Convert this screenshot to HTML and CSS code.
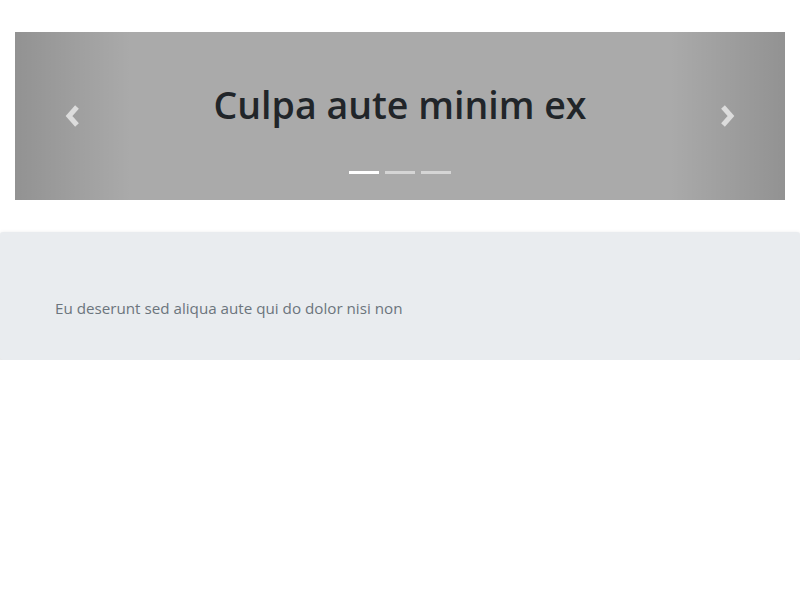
FILE: index.html
```html
<!DOCTYPE html>
<html>
<head>
<meta charset="utf-8">
<link rel="stylesheet" href="styles.css">
</head>
<body>
<div class="wrap">
  <div class="carousel">
    <div class="slide">
      <h1 class="title">Culpa aute minim ex</h1>
    </div>
    <a class="control prev">
      <svg width="16" height="22" viewBox="0 0 16 22"><polyline points="12,2 4,11 12,20" fill="none" stroke="#dcdcdc" stroke-width="5"/></svg>
    </a>
    <a class="control next">
      <svg width="16" height="22" viewBox="0 0 16 22"><polyline points="4,2 12,11 4,20" fill="none" stroke="#dcdcdc" stroke-width="5"/></svg>
    </a>
    <ol class="indicators">
      <li class="active"></li>
      <li></li>
      <li></li>
    </ol>
  </div>
</div>
<div class="jumbotron">
  <p class="lead">Eu deserunt sed aliqua aute qui do dolor nisi non</p>
</div>
</body>
</html>
```
FILE: styles.css
```css
html, body { margin: 0; padding: 0; background: #fff; }
body { font-family: "Open Sans", "Noto Sans", sans-serif; color: #212529; }
.wrap { padding: 32px 15px 32px; }
.carousel { position: relative; height: 168px; background: #aaa; overflow: hidden; }
.slide { height: 100%; display: flex; align-items: flex-start; justify-content: center; }
.title { margin: 81px 0 0; font-size: 37.5px; font-weight: 600; line-height: 1; color: #212529; transform: translateY(-27px); }
.control { position: absolute; top: 0; bottom: 0; width: 15%; display: flex; align-items: center; justify-content: center; }
.prev { left: 0; background: linear-gradient(to right, rgba(0,0,0,0.14), rgba(0,0,0,0)); }
.next { right: 0; background: linear-gradient(to left, rgba(0,0,0,0.14), rgba(0,0,0,0)); }
.prev svg { margin-left: 1px; }
.indicators { position: absolute; left: 0; right: 0; bottom: 26px; margin: 0; padding: 0; list-style: none; display: flex; justify-content: center; gap: 6px; }
.indicators li { width: 30px; height: 3px; background: rgba(255,255,255,0.5); }
.indicators li.active { background: #fff; }
.jumbotron { background: #e9ecef; border-radius: 3px; height: 128px; box-sizing: border-box; padding: 66px 55px 0; box-shadow: 0 2px 5px rgba(0,0,0,0.18); }
.lead { margin: 0; font-size: 15.2px; line-height: 20px; color: #6c757d; }
```
